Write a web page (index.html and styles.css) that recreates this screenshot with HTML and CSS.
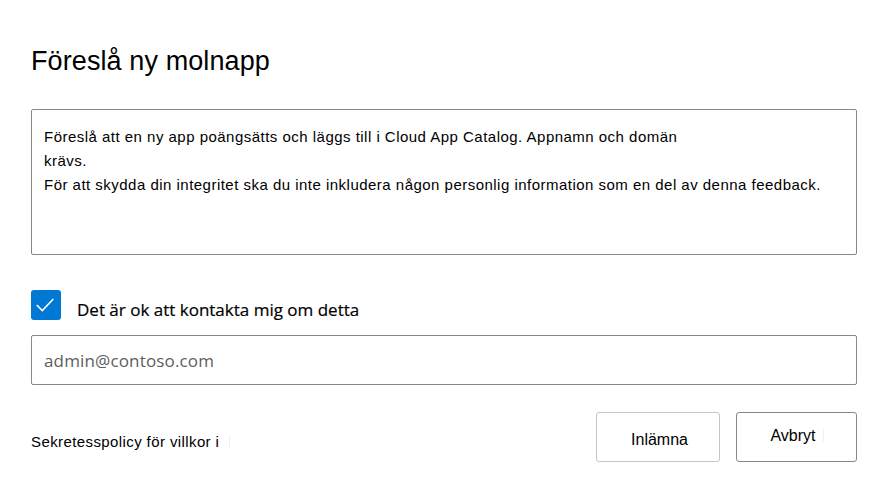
FILE: index.html
```html
<!DOCTYPE html>
<html lang="sv">
<head>
<meta charset="utf-8">
<title>Föreslå ny molnapp</title>
<link rel="stylesheet" href="styles.css">
</head>
<body>
<div class="dialog">
  <h1 class="title">Föreslå ny molnapp</h1>
  <div class="message">
    <div class="line">Föreslå att en ny app poängsätts och läggs till i Cloud App Catalog. Appnamn och domän</div>
    <div class="line">krävs.</div>
    <div class="line">För att skydda din integritet ska du inte inkludera någon personlig information som en del av denna feedback.</div>
  </div>
  <label class="consent">
    <span class="checkbox">
      <svg width="30" height="30" viewBox="0 0 30 30"><path d="M5.8 15 L11.3 20.6 L22.3 9" fill="none" stroke="#fff" stroke-width="1.6"/></svg>
    </span>
    <span class="consent-text">Det är ok att kontakta mig om detta</span>
  </label>
  <input class="email" type="text" placeholder="admin@contoso.com">
  <div class="footer">
    <span class="policy">Sekretesspolicy för villkor i<span class="mark"></span></span>
    <div class="actions">
      <button class="btn btn-submit" type="button">Inlämna</button>
      <button class="btn btn-cancel" type="button">Avbryt<span class="mark"></span></button>
    </div>
  </div>
</div>
</body>
</html>
```
FILE: styles.css
```css
html, body {
  margin: 0;
  padding: 0;
  background: #ffffff;
}

.dialog {
  padding: 45px 28px 0 31px;
  font-family: "Liberation Sans", Arial, sans-serif;
  color: #000000;
}

.title {
  margin: 0 0 32px 0;
  font-size: 27px;
  line-height: 32px;
  font-weight: 400;
  color: #000000;
  letter-spacing: 0.1px;
}

.message {
  box-sizing: border-box;
  height: 146px;
  border: 1px solid #8a8886;
  border-radius: 2px;
  padding: 15px 11px 0 12px;
  font-size: 15px;
  line-height: 24px;
  letter-spacing: 0.48px;
  color: #000000;
}

.consent {
  display: flex;
  align-items: flex-start;
  margin-top: 35px;
  height: 30px;
}

.checkbox {
  width: 30px;
  height: 30px;
  background: #0078d4;
  border-radius: 3px;
  display: block;
  flex: none;
}

.checkbox svg {
  display: block;
}

.consent-text {
  margin-left: 16px;
  margin-top: 8px;
  font-family: "Open Sans", "Noto Sans", sans-serif;
  font-size: 17px;
  line-height: 23px;
  color: #000000;
  -webkit-text-stroke: 0.2px #000;
}

.email {
  display: block;
  box-sizing: border-box;
  width: 100%;
  height: 50px;
  margin: 15px 0 0 0;
  padding: 0 12px;
  border: 1px solid #8a8886;
  border-radius: 2px;
  font-family: "Open Sans", "Noto Sans", sans-serif;
  font-size: 17px;
  letter-spacing: 0.15px;
  outline: none;
  background: #fff;
}

.email::placeholder {
  color: #605e5c;
  opacity: 1;
}

.footer {
  display: flex;
  justify-content: space-between;
  align-items: flex-start;
  margin-top: 27px;
}

.policy {
  margin-top: 20px;
  font-size: 15px;
  line-height: 20px;
  letter-spacing: 0.4px;
  color: #000000;
}

.mark {
  display: inline-block;
  width: 1px;
  height: 12px;
  margin-left: 10px;
  background: #eeeeee;
  vertical-align: -1px;
}

.actions {
  display: flex;
  gap: 16px;
}

.btn {
  box-sizing: border-box;
  height: 50px;
  background: #ffffff;
  border-radius: 3px;
  font-family: "Liberation Sans", Arial, sans-serif;
  font-size: 16px;
  color: #000000;
  cursor: pointer;
}

.btn-submit {
  width: 124px;
  border: 1px solid #c8c6c4;
  padding: 6px 0 0 3px;
}

.btn-cancel {
  width: 121px;
  border: 1px solid #8a8886;
  padding: 0 0 3px 1px;
}

.btn-cancel .mark {
  margin-left: 7px;
  height: 13px;
}
```
